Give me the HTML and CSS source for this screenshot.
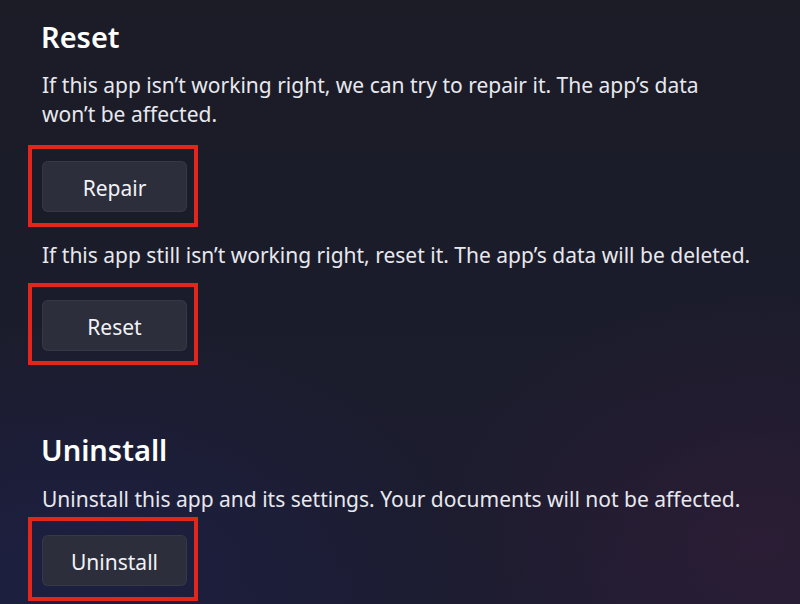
FILE: index.html
```html
<!DOCTYPE html>
<html lang="en">
<head>
<meta charset="utf-8">
<title>App settings</title>
<link rel="stylesheet" href="styles.css">
</head>
<body>
<main class="page">
  <section class="group">
    <h2 class="title">Reset</h2>
    <p class="desc">If this app isn’t working right, we can try to repair it. The app’s data<br>won’t be affected.</p>
    <div class="mark"><button class="btn" type="button">Repair</button></div>
    <p class="desc desc-after">If this app still isn’t working right, reset it. The app’s data will be deleted.</p>
    <div class="mark mark-second"><button class="btn" type="button">Reset</button></div>
  </section>
  <section class="group group-uninstall">
    <h2 class="title">Uninstall</h2>
    <p class="desc">Uninstall this app and its settings. Your documents will not be affected.</p>
    <div class="mark mark-last"><button class="btn" type="button">Uninstall</button></div>
  </section>
</main>
</body>
</html>
```
FILE: styles.css
```css
html, body {
  margin: 0;
  height: 100%;
}
body {
  font-family: "Noto Sans", "Open Sans", sans-serif;
  color: #ececf2;
  background:
    radial-gradient(ellipse 70% 60% at 10% 95%, rgba(30, 34, 80, 0.55), rgba(30, 34, 80, 0) 70%),
    radial-gradient(ellipse 60% 60% at 95% 90%, rgba(60, 30, 60, 0.45), rgba(60, 30, 60, 0) 70%),
    linear-gradient(180deg, #1b1c26 0%, #1b1c2a 40%, #1c1c30 100%);
  overflow: hidden;
}
.page {
  padding: 17px 0 0 42px;
}
.title {
  margin: 0;
  font-size: 29px;
  line-height: 40px;
  font-weight: 600;
  color: #ffffff;
  margin-left: -1px;
}
.desc {
  margin: 14px 0 0;
  font-size: 21px;
  line-height: 29px;
  color: #e8e8ee;
  white-space: nowrap;
}
.desc-after {
  margin-top: 14px;
}
.mark {
  display: inline-block;
  vertical-align: top;
  margin: 16px 0 0 -14px;
  border: 4px solid #e3261b;
  padding: 12px 7px 11px 10px;
}
.mark-second {
  margin-top: 13px;
  padding-top: 13px;
  padding-bottom: 10px;
}
.mark-last {
  margin-top: 3px;
  padding-top: 14px;
}
.btn {
  display: block;
  box-sizing: border-box;
  width: 145px;
  height: 51px;
  border: 1px solid rgba(255, 255, 255, 0.05);
  border-radius: 6px;
  background: #2c2e3c;
  color: #f2f2f6;
  font-family: inherit;
  font-size: 21px;
  padding: 2px 0 0;
}
.group-uninstall {
  margin-top: 65px;
}
.group-uninstall .desc {
  margin-top: 15px;
}
```
